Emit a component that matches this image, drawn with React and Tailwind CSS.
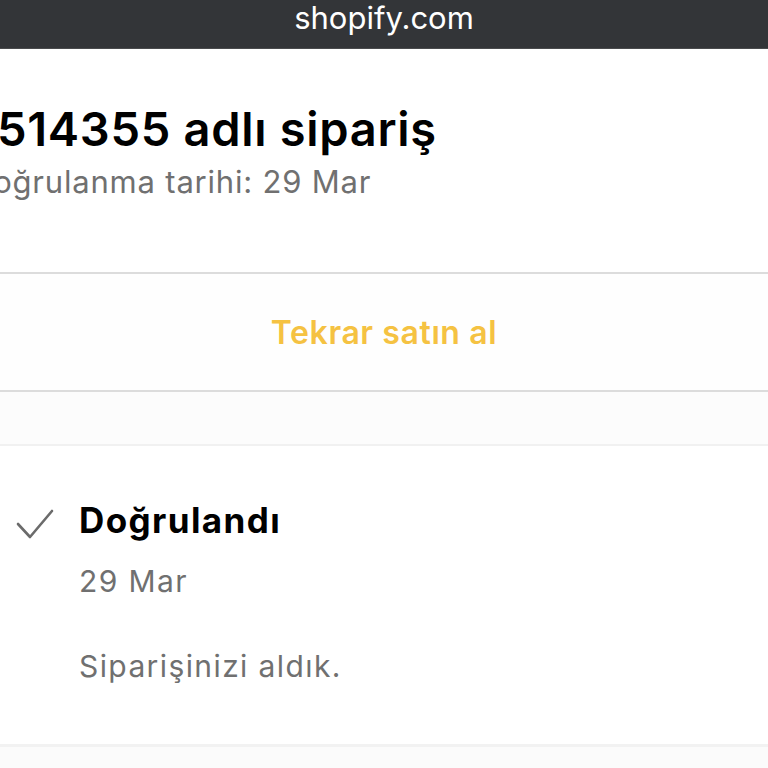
import React from 'react'

const Check = () => (
  <svg width="40" height="40" viewBox="0 0 40 40" className="shrink-0">
    <polyline points="2,20 14,33 36,7" fill="none" stroke="#6b6b6b" strokeWidth="2.6" strokeLinecap="round" strokeLinejoin="round" />
  </svg>
)

export default function App() {
  return (
    <div className="w-[768px] h-[768px] overflow-hidden bg-white font-['Inter',sans-serif]">
      {/* Address bar */}
      <div className="h-[49px] bg-[#333538] flex items-center justify-center border-b border-[#4a4b4d]">
        <span className="text-white text-[31px] leading-none -mt-[13px] tracking-[0px]">
          shopify.com
        </span>
      </div>

      {/* Order header */}
      <div className="h-[223px] pt-[50px] overflow-hidden">
        <h1 className="text-[47px] leading-[60px] font-semibold text-black -ml-[3px] whitespace-nowrap tracking-[0.7px]">
          514355 adlı sipariş
        </h1>
        <p className="text-[31px] leading-[34px] text-[#707070] -ml-[30px] whitespace-nowrap mt-[6px] tracking-[0.8px]">
          Doğrulanma tarihi: 29 Mar
        </p>
      </div>

      {/* Buy again */}
      <div className="h-[120px] border-y-2 border-[#dcdcdc] flex items-center justify-center bg-[#fefefe]">
        <span className="text-[32px] font-semibold text-[#f5c242] leading-none tracking-[0.6px] mt-[2px]">
          Tekrar satın al
        </span>
      </div>

      {/* Spacer */}
      <div className="h-[54px] bg-[#fcfcfc] border-b-2 border-[#f1f1f1]" />

      {/* Status card */}
      <div className="h-[298px] bg-white pt-[56px]">
        <div className="flex items-start">
          <div className="w-[80px] pl-[16px] pt-[2px]">
            <Check />
          </div>
          <div className="-ml-[1px]">
            <div className="text-[35px] leading-[36px] font-bold text-black tracking-[1.4px]">Doğrulandı</div>
            <div className="text-[30px] leading-[36px] text-[#707070] mt-[25px] tracking-[1.4px]">29 Mar</div>
            <div className="text-[30px] leading-[36px] text-[#707070] mt-[49px] tracking-[1.4px]">Siparişinizi aldık.</div>
          </div>
        </div>
      </div>

      <div className="h-[3px] bg-[#f2f2f2]" />
      <div className="h-[30px] bg-[#fbfbfb]" />
    </div>
  )
}
